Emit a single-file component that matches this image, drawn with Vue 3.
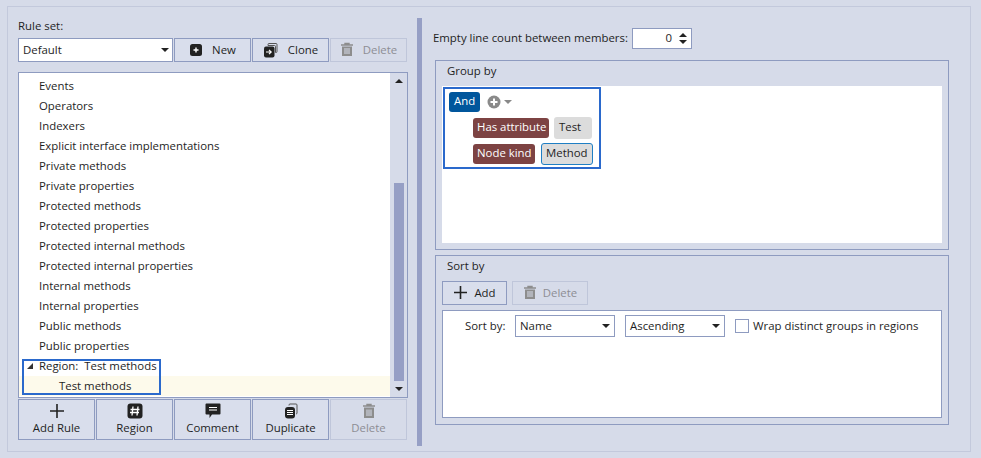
<template>
  <div class="page">
    <div class="frame">
      <!-- Left column -->
      <div class="left">
        <div class="ruleset-label">Rule set:</div>
        <div class="toolbar">
          <div class="combo ruleset-combo">
            <span>Default</span>
            <i class="caret"></i>
          </div>
          <button class="btn top-btn">
            <svg width="14" height="14" viewBox="0 0 14 14"><rect x="1" y="1" width="12" height="12" rx="2.5" fill="#222"/><path d="M7 4.500v5M4.500 7h5" stroke="#fff" stroke-width="1.400"/></svg>
            <span>New</span>
          </button>
          <button class="btn top-btn">
            <svg width="16" height="16" viewBox="0 0 16 16"><path d="M5 3.500V2.500q0-1 1-1h7q1 0 1 1v7q0 1-1 1h-.5V4.500q0-1-1-1z" fill="none" stroke="#555" stroke-width="1"/><rect x="1" y="4.500" width="10.500" height="11" rx="2" fill="#222"/><path d="M3 10h5M6 7.800 8.200 10 6 12.200" stroke="#fff" stroke-width="1.200" fill="none"/></svg>
            <span>Clone</span>
          </button>
          <button class="btn top-btn disabled">
            <svg width="14" height="15" viewBox="0 0 14 15"><path d="M1 3h12M5 3V1.500h4V3" stroke="#8d8d8d" stroke-width="1.400" fill="none"/><path d="M2 4.500h10V14H2z" fill="#8d8d8d"/><path d="M5 6v6M7 6v6M9 6v6" stroke="#d6dbe9" stroke-width="1"/></svg>
            <span>Delete</span>
          </button>
        </div>

        <div class="list">
          <div class="rows">
            <div v-for="r in rules" :key="r" class="row">{{ r }}</div>
            <div class="row region"><i class="tree-arrow"></i>Region:&nbsp; Test methods</div>
            <div class="row child">Test methods</div>
          </div>
          <div class="scrollbar">
            <i class="sb-up"></i>
            <div class="sb-track"><div class="sb-thumb"></div></div>
            <i class="sb-down"></i>
          </div>
          <div class="hl hl-region"></div>
        </div>

        <div class="bottom-bar">
          <button class="btn big-btn">
            <svg width="16" height="16" viewBox="0 0 16 16"><path d="M8 1v14M1 8h14" stroke="#222" stroke-width="1.600"/></svg>
            <span>Add Rule</span>
          </button>
          <button class="btn big-btn">
            <svg width="16" height="16" viewBox="0 0 16 16"><rect x="0.500" y="0.500" width="15" height="15" rx="3" fill="#222"/><path d="M6 3.500 5 12.500M11 3.500l-1 9M3.500 6.500h9M3 9.500h9" stroke="#fff" stroke-width="1.300"/></svg>
            <span>Region</span>
          </button>
          <button class="btn big-btn">
            <svg width="16" height="16" viewBox="0 0 16 16"><path d="M1.500 0.500h13q1 0 1 1v9q0 1-1 1H7L4.500 15v-3.500h-3q-1 0-1-1v-9q0-1 1-1z" fill="#222"/><path d="M4 4.500h8M4 7h8" stroke="#fff" stroke-width="1"/></svg>
            <span>Comment</span>
          </button>
          <button class="btn big-btn">
            <svg width="16" height="16" viewBox="0 0 16 16"><path d="M6 2.500V2q0-1 1-1h6q1 0 1 1v8q0 1-1 1" fill="none" stroke="#555" stroke-width="1"/><rect x="2" y="4" width="10" height="11.500" rx="3" fill="#222"/><path d="M4 7.500h6M4 9.500h6M4 11.500h6" stroke="#fff" stroke-width="1"/></svg>
            <span>Duplicate</span>
          </button>
          <button class="btn big-btn disabled">
            <svg width="14" height="16" viewBox="0 0 14 16"><path d="M1 3h12M5 3V1.500h4V3" stroke="#8d8d8d" stroke-width="1.400" fill="none"/><path d="M2 4.500h10V15H2z" fill="#8d8d8d"/><path d="M5 6.500v6.500M7 6.500v6.500M9 6.500v6.500" stroke="#d6dbe9" stroke-width="1"/></svg>
            <span>Delete</span>
          </button>
        </div>
      </div>

      <div class="divider"></div>

      <!-- Right column -->
      <div class="right">
        <div class="spin-row">
          <span class="spin-label">Empty line count between members:</span>
          <div class="spinner">
            <span class="spin-val">0</span>
            <span class="spin-arrows"><i class="up"></i><i class="down"></i></span>
          </div>
        </div>

        <div class="group group-by">
          <div class="group-title">Group by</div>
          <div class="panel group-panel">
            <div class="tree">
              <div class="tree-line">
                <span class="chip and">And</span>
                <svg class="add-ico" width="14" height="14" viewBox="0 0 14 14"><circle cx="7" cy="7" r="6.500" fill="#8a8a8a"/><path d="M7 3.500v7M3.500 7h7" stroke="#fff" stroke-width="2"/></svg>
                <i class="mini-caret"></i>
              </div>
              <div class="tree-line nested">
                <span class="chip brown has-attr">Has attribute</span>
                <span class="chip grey test">Test</span>
              </div>
              <div class="tree-line nested tight">
                <span class="chip brown node-kind">Node kind</span>
                <span class="chip grey selected">Method</span>
              </div>
            </div>
          </div>
        </div>

        <div class="group sort-by">
          <div class="group-title">Sort by</div>
          <div class="sort-tools">
            <button class="btn flat-btn add">
              <svg width="15" height="15" viewBox="0 0 15 15"><path d="M7.500 1v13M1 7.500h13" stroke="#222" stroke-width="1.600"/></svg>
              <span>Add</span>
            </button>
            <button class="btn flat-btn del disabled">
              <svg width="14" height="15" viewBox="0 0 14 15"><path d="M1 3h12M5 3V1.500h4V3" stroke="#8d8d8d" stroke-width="1.400" fill="none"/><path d="M2 4.500h10V14H2z" fill="#8d8d8d"/><path d="M5 6v6M7 6v6M9 6v6" stroke="#d6dbe9" stroke-width="1"/></svg>
              <span>Delete</span>
            </button>
          </div>
          <div class="panel sort-panel">
            <span class="sort-label">Sort by:</span>
            <div class="combo sort-combo"><span>Name</span><i class="caret"></i></div>
            <div class="combo sort-combo"><span>Ascending</span><i class="caret"></i></div>
            <span class="check"></span>
            <span class="check-label">Wrap distinct groups in regions</span>
          </div>
        </div>
      </div>
    </div>
  </div>
</template>

<script setup>
const rules = [
  'Delegates',
  'Events',
  'Operators',
  'Indexers',
  'Explicit interface implementations',
  'Private methods',
  'Private properties',
  'Protected methods',
  'Protected properties',
  'Protected internal methods',
  'Protected internal properties',
  'Internal methods',
  'Internal properties',
  'Public methods',
  'Public properties'
]
</script>

<style>
html, body {
  margin: 0;
  background: #d6dbe9;
}
</style>

<style scoped>
.page {
  width: 981px;
  height: 458px;
  padding: 6px 10px 6px 7px;
  box-sizing: border-box;
  background: #d6dbe9;
  font-family: "Open Sans", "Noto Sans", sans-serif;
  font-size: 11.4px;
  color: #1e1e1e;
  overflow: hidden;
}
.frame {
  height: 100%;
  box-sizing: border-box;
  border: 1px solid #c3c9dc;
  padding: 11px 0 0 10px;
  display: flex;
}
.left {
  width: 389px;
  flex: none;
}
.ruleset-label {
  height: 20px;
  line-height: 15px;
}
.toolbar {
  display: flex;
  gap: 1px;
  height: 24px;
}
.btn {
  font: inherit;
  color: inherit;
  background: #d9deec;
  border: 1px solid #8e9bc0;
  padding: 0;
  box-sizing: border-box;
  display: flex;
  align-items: center;
  justify-content: center;
}
.btn.disabled {
  color: #8d8d94;
  border-color: #bfc6da;
  background: #d6dbe9;
}
.combo {
  background: #fff;
  border: 1px solid #8e9bc0;
  box-sizing: border-box;
  display: flex;
  align-items: center;
  justify-content: space-between;
}
.caret {
  width: 0;
  height: 0;
  border-left: 4px solid transparent;
  border-right: 4px solid transparent;
  border-top: 4px solid #222;
}
.ruleset-combo {
  width: 155px;
  padding: 0 3px 1px 4px;
}
.top-btn {
  width: 77px;
  gap: 9px;
  padding-bottom: 1px;
}
.list {
  position: relative;
  margin-top: 10px;
  height: 326px;
  width: 390px;
  box-sizing: border-box;
  border: 1px solid #8e9bc0;
  background: #fff;
  display: flex;
  overflow: hidden;
}
.rows {
  flex: 1;
  margin-top: -17px;
}
.row {
  height: 20px;
  line-height: 20px;
  padding-left: 20px;
  position: relative;
  white-space: nowrap;
}
.row.child {
  padding-left: 40px;
  background: #fdfaeb;
}
.tree-arrow {
  position: absolute;
  left: 8px;
  top: 7px;
  border-left: 6px solid transparent;
  border-bottom: 6px solid #333;
}
.scrollbar {
  width: 17px;
  background: #d6dbe9;
  display: flex;
  flex-direction: column;
  align-items: center;
  flex: none;
}
.sb-up, .sb-down {
  display: block;
  width: 0;
  height: 0;
  border-left: 4px solid transparent;
  border-right: 4px solid transparent;
  margin: 6px 0 7px;
}
.sb-up {
  border-bottom: 4px solid #222;
}
.sb-down {
  border-top: 4px solid #222;
}
.sb-track {
  flex: 1;
  width: 100%;
  display: flex;
  justify-content: center;
  padding-top: 93px;
  box-sizing: border-box;
}
.sb-thumb {
  width: 10px;
  height: 198px;
  background: #969fc5;
}
.hl-region {
  position: absolute;
  left: 3px;
  top: 286px;
  width: 139px;
  height: 36px;
  box-sizing: border-box;
  border: 2px solid #2a69cc;
}
.bottom-bar {
  display: flex;
  gap: 1px;
  margin-top: 1px;
  height: 41px;
}
.big-btn {
  width: 77px;
  flex-direction: column;
  gap: 1px;
  padding-bottom: 2px;
}

.divider {
  width: 5px;
  height: 428px;
  margin-left: 10px;
  background: #969fc5;
  flex: none;
}
.right {
  flex: 1;
  padding-left: 11px;
}
.spin-row {
  display: flex;
  align-items: center;
  margin-top: 9px;
  height: 22px;
}
.spin-label {
  width: 199px;
  white-space: nowrap;
  padding-bottom: 2px;
}
.spinner {
  width: 60px;
  height: 21px;
  box-sizing: border-box;
  background: #d6dbe9;
  display: flex;
}
.spin-val {
  width: 43px;
  box-sizing: border-box;
  background: #fff;
  border: 1px solid #8e9bc0;
  border-right: 0;
  text-align: right;
  padding-right: 3px;
  line-height: 17px;
}
.spin-arrows {
  flex: 1;
  background: #fff;
  border: 1px solid #8e9bc0;
  border-left: 0;
  display: flex;
  flex-direction: column;
  justify-content: center;
  align-items: center;
  gap: 3px;
}
.spin-arrows i {
  width: 0;
  height: 0;
  border-left: 4px solid transparent;
  border-right: 4px solid transparent;
}
.spin-arrows .up { border-bottom: 4px solid #222; }
.spin-arrows .down { border-top: 4px solid #222; }

.group {
  margin-left: 2px;
  width: 514px;
  box-sizing: border-box;
  border: 1px solid #8e9bc0;
  padding: 0 6px;
}
.group-by {
  margin-top: 11px;
  height: 190px;
}
.group-title {
  padding-left: 5px;
  height: 25px;
  line-height: 19px;
}
.panel {
  background: #fff;
  width: 500px;
  box-sizing: border-box;
}
.group-panel {
  height: 157px;
  padding: 1px;
}
.tree {
  width: 158px;
  height: 82px;
  box-sizing: border-box;
  border: 2px solid #2a69cc;
  padding: 3px 4px 0;
}
.tree-line {
  display: flex;
  align-items: center;
  gap: 6px;
  height: 20px;
  white-space: nowrap;
}
.tree-line.nested {
  margin-top: 6px;
  padding-left: 24px;
  gap: 5px;
}
.tree-line.tight {
  gap: 6px;
}
.chip {
  height: 20px;
  line-height: 18px;
  border-radius: 3px;
  padding: 0 4px;
  box-sizing: border-box;
}
.and {
  background: #00569c;
  color: #fff;
  padding: 0 5px;
}
.brown {
  background: #7d4343;
  color: #fff;
}
.has-attr {
  width: 76px;
  padding: 0 3px 0 4px;
  overflow: hidden;
}
.node-kind {
  width: 62px;
}
.grey {
  background: #dcdcdc;
  height: 22px;
  line-height: 20px;
}
.test {
  width: 38px;
  padding-left: 5px;
}
.selected {
  width: 52px;
  border: 1px solid #1f7fc4;
  line-height: 18px;
}
.add-ico {
  margin-left: 1px;
}
.mini-caret {
  margin-left: -3px;
  border-left: 4px solid transparent;
  border-right: 4px solid transparent;
  border-top: 4px solid #888;
}

.sort-by {
  margin-top: 5px;
  height: 170px;
}
.sort-tools {
  display: flex;
  gap: 5px;
  height: 24px;
}
.flat-btn {
  gap: 6px;
  padding-bottom: 1px;
}
.add { width: 65px; }
.del { width: 76px; }
.panel.sort-panel {
  margin-top: 5px;
  height: 108px;
  border: 1px solid #8e9bc0;
  padding: 4px 0 0 22px;
  display: flex;
  align-items: flex-start;
}
.sort-label {
  line-height: 21px;
  width: 50px;
}
.sort-combo {
  width: 100px;
  height: 22px;
  margin-left: 10px;
  padding: 0 4px 1px;
}
.sort-label + .sort-combo {
  margin-left: 0;
}
.check {
  width: 14px;
  height: 14px;
  margin: 4px 0 0 10px;
  box-sizing: border-box;
  border: 1px solid #8e9bc0;
}
.check-label {
  margin-left: 4px;
  line-height: 21px;
  white-space: nowrap;
}
</style>
